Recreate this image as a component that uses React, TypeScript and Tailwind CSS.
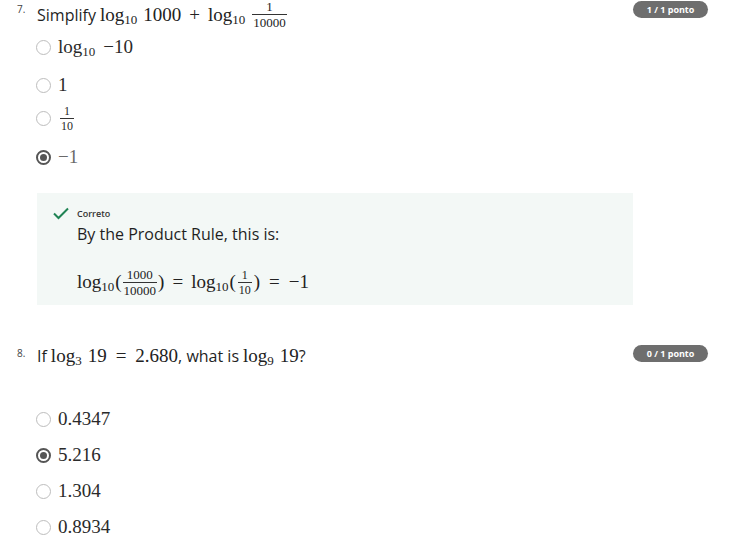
import React from "react";

const serif = { fontFamily: '"Liberation Serif", "DejaVu Serif", serif' } as const;

function Frac({ n, d, size = "text-[12px]", cls = "mx-[2px]" }: { n: string; d: string; size?: string; cls?: string }) {
  return (
    <span className={`inline-flex flex-col items-center align-middle leading-none ${cls} ${size}`}>
      <span className="px-[1px]">{n}</span>
      <span className="self-stretch border-t border-[#333] mt-[1px] mb-[1px]" />
      <span className="px-[1px]">{d}</span>
    </span>
  );
}

function Log({ base }: { base: string }) {
  return (
    <span>
      log<sub className="text-[13px] relative top-[3px] align-baseline">{base}</sub>
    </span>
  );
}

function Radio({ checked }: { checked?: boolean }) {
  return checked ? (
    <span className="w-[15px] h-[15px] rounded-full border-[2px] border-[#555] flex items-center justify-center shrink-0 bg-white">
      <span className="w-[7px] h-[7px] rounded-full bg-[#555]" />
    </span>
  ) : (
    <span className="w-[15px] h-[15px] rounded-full border-[1.5px] border-[#bdbdbd] shrink-0 bg-white" />
  );
}

function Badge({ text }: { text: string }) {
  return (
    <span className="ml-auto mr-[26px] h-[17px] w-[75px] rounded-full bg-[#6e6e6e] text-white text-[9px] font-bold flex items-center justify-center" style={{ fontFamily: '"Open Sans", sans-serif' }}>
      {text}
    </span>
  );
}

function Option({ checked, children, h, faded }: { checked?: boolean; children: React.ReactNode; h: string; faded?: boolean }) {
  return (
    <div className={`flex items-center pl-[36px] ${h}`}>
      <Radio checked={checked} />
      <span className={`ml-[7px] text-[19px] flex items-center ${faded ? "text-[#6a6a6a]" : "text-[#2a2a2a]"}`} style={serif}>
        {children}
      </span>
    </div>
  );
}

export default function App() {
  return (
    <div className="w-[734px] h-[545px] bg-white flex flex-col overflow-hidden text-[#1f1f1f]" style={{ fontFamily: '"Open Sans", sans-serif' }}>
      <div className="flex-1 flex flex-col">
        {/* Q7 */}
        <div className="flex items-start pt-[1px] h-[30px] shrink-0">
          <span className="w-[20px] pl-[17px] text-[10px] text-[#444] pt-[1px] box-content">7.</span>
          <div className="flex items-center text-[16px] ml-0 mt-[-1px]">
            <span>Simplify</span>
            <span className="ml-[4px] text-[19px] text-[#222] flex items-center" style={serif}>
              <Log base="10" />
              <span className="ml-[6px]">1000</span>
              <span className="mx-[8px]">+</span>
              <Log base="10" />
              <span className="ml-[5px] relative top-[-1px]"><Frac n="1" d="10000" size="text-[13px]" /></span>
            </span>
          </div>
          <Badge text="1 / 1 ponto" />
        </div>

        <Option h="h-[34px] shrink-0"><Log base="10" /><span className="ml-[8px]">−10</span></Option>
        <Option h="h-[42px] shrink-0">1</Option>
        <Option h="h-[24px] shrink-0"><Frac n="1" d="10" size="text-[12px]" /></Option>
        <Option h="h-[55px] shrink-0" checked faded>−1</Option>

        {/* Feedback */}
        <div className="ml-[37px] mt-[8px] w-[596px] h-[112px] shrink-0 bg-[#f3f8f6] flex flex-col">
          <div className="flex items-center mt-[14px] ml-[16px]">
            <svg width="16" height="13" viewBox="0 0 16 13" fill="none">
              <path d="M1 6.5 L5.5 11 L15 1.5" stroke="#1f8354" strokeWidth="2" />
            </svg>
            <span className="ml-[8px] text-[9px] font-semibold text-[#333]">Correto</span>
          </div>
          <div className="ml-[40px] mt-[1px] text-[16px] text-[#1f1f1f]">By the Product Rule, this is:</div>
          <div className="ml-[40px] mt-[22px] text-[19px] text-[#222] flex items-center" style={serif}>
            <Log base="10" />
            <span className="ml-[1px]">(</span>
            <Frac n="1000" d="10000" size="text-[13px]" cls="mx-[1px]" />
            <span>)</span>
            <span className="mx-[8px]">=</span>
            <Log base="10" />
            <span className="ml-[1px]">(</span>
            <Frac n="1" d="10" size="text-[12px]" cls="mx-[2px]" />
            <span>)</span>
            <span className="mx-[9px]">=</span>
            <span>−1</span>
          </div>
        </div>

        {/* Q8 */}
        <div className="flex items-start mt-[40px] h-[46px] shrink-0">
          <span className="w-[20px] pl-[17px] text-[10px] text-[#444] pt-[1px] box-content">8.</span>
          <div className="flex items-center text-[16px] mt-[-3px]">
            <span>If</span>
            <span className="ml-[4px] text-[19px] text-[#222] flex items-baseline" style={serif}>
              <Log base="3" />
              <span className="ml-[6px]">19</span>
              <span className="mx-[9px]">=</span>
              <span>2.680</span>
            </span>
            <span>, what is</span>
            <span className="ml-[4px] text-[19px] text-[#222] flex items-baseline" style={serif}>
              <Log base="9" />
              <span className="ml-[6px]">19</span>
            </span>
            <span>?</span>
          </div>
          <Badge text="0 / 1 ponto" />
        </div>

        <div className="mt-[10px]">
          <Option h="h-[36px]">0.4347</Option>
          <Option h="h-[36px]" checked>5.216</Option>
          <Option h="h-[36px]">1.304</Option>
          <Option h="h-[36px]">0.8934</Option>
        </div>
      </div>
      <div className="h-[11px] bg-[#f0f0f0] shrink-0" />
    </div>
  );
}
